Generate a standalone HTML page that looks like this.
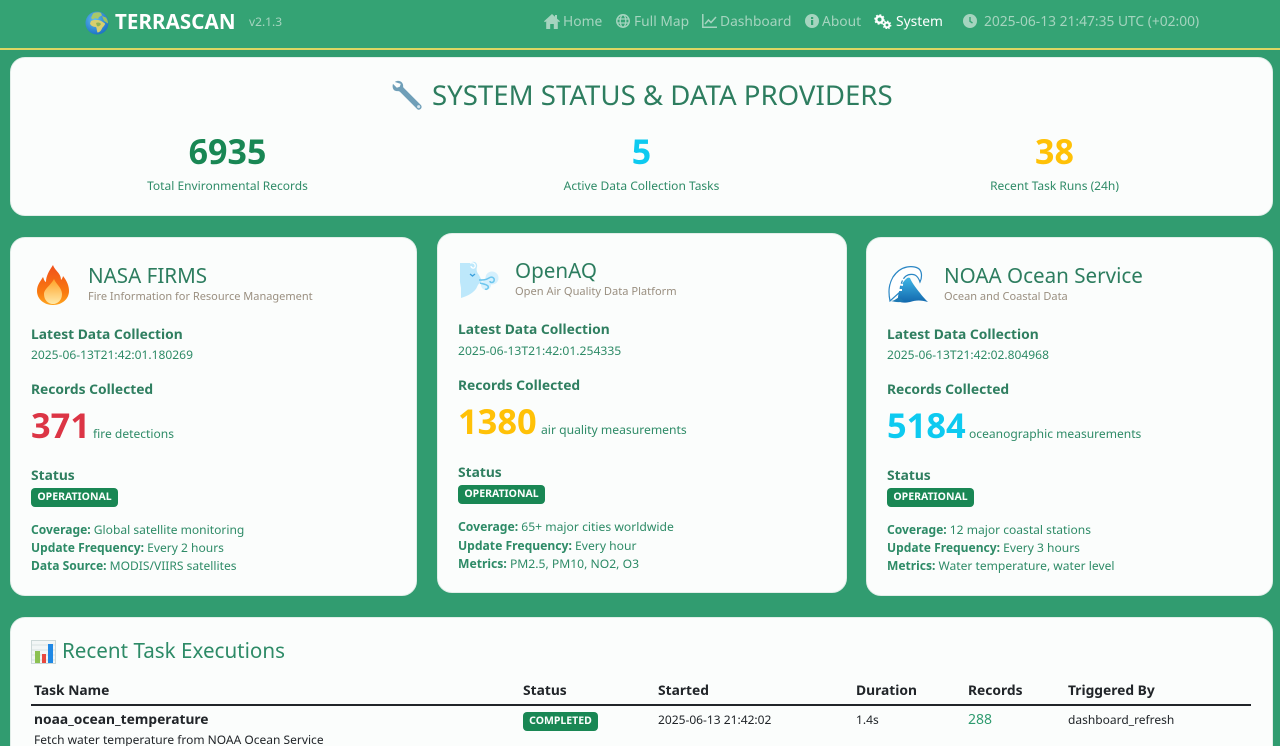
<!DOCTYPE html>
<html lang="en"><head><meta charset="utf-8"><title>TerraScan System Status</title>
<style>
*{box-sizing:border-box}
html,body{margin:0;padding:0;width:1280px;height:746px;overflow:hidden;background:#319c70}
body{position:relative;font-family:"Noto Sans","Open Sans","DejaVu Sans","Liberation Sans",sans-serif;color:#2e8b67}
.t{position:absolute;white-space:nowrap;line-height:20px;height:20px}
.card{position:absolute;background:#fbfdfc;border-radius:15px;border:1px solid #e2eee9}
.b{font-weight:700}
svg{position:absolute;display:block}
.nav{color:#a5d4bf;font-size:13.8px}
.h3{font-size:20.6px;color:#2d7d5f}
.sub{font-size:11px;color:#9a8f80}
.lab{font-size:13.8px;font-weight:700;color:#2f7f60}
.val{font-size:12.05px;color:#2e8b67}
.m{font-size:12.15px}
.big{font-size:34px;font-weight:700;line-height:40px;height:40px}
.bn{font-size:34.4px}
.bdg{position:absolute;background:#198754;color:#fbfdfc;font-size:10.5px;font-weight:700;border-radius:4px;text-align:center;line-height:19px;height:19px}
.th{font-size:13.8px;font-weight:700;color:#212529}
.td{font-size:12px;color:#212529}
</style></head><body>
<div style="position:absolute;left:0;top:0;width:1280px;height:48px;background:#34a374"></div>
<div style="position:absolute;left:0;top:48px;width:1280px;height:2px;background:#dcd763"></div>

<svg style="left:85px;top:11px" width="24" height="24" viewBox="0 0 24 24"><defs><radialGradient id="gl" cx=".4" cy=".35" r=".75"><stop offset="0" stop-color="#62bdf2"/><stop offset="1" stop-color="#1569c0"/></radialGradient></defs><circle cx="12" cy="12" r="11.500" fill="url(#gl)"/><path d="M8 2.500c3-1.500 6-1.500 8-.5l1 2.500-3 1.500-1 2-3-1-2 1.500L6 7z" fill="#a8c86a"/><path d="M6 10c3-1.500 8-1.500 11 .5l3 2c0 2-2 3-3 5-1 2.500-3 4-4.500 4-1-2-.5-4-1.500-5.500-3 0-5.500-1.500-6-3.500z" fill="#d8cf6e"/><path d="M11 12c2-1 4-.5 5 1-1 2-3 3-4 2z" fill="#8cb457"/><path d="M17 5l4 1.500c1.500 2 2 4 2 6l-4-2.500z" fill="#9cc25f"/></svg>
<div class="t b" style="left:115px;top:12px;font-size:20.5px;color:#fff;letter-spacing:.1px">TERRASCAN</div>
<div class="t" style="left:249px;top:12px;font-size:12px;color:#a5d4bf">v2.1.3</div>

<svg style="left:544px;top:14px" width="16" height="15" viewBox="0 0 16 15"><path fill="#a5d4bf" d="M8 0 0 7.300l1 1L2.200 7.300V15h4v-5h3.600v5h4V7.300L15 8.300l1-1L13 4.600V1h-2v1.800z"/></svg>
<div class="t nav" style="left:563px;top:12px">Home</div>
<svg style="left:616px;top:14px" width="14" height="14" viewBox="0 0 14 14"><circle cx="7" cy="7" r="6.200" fill="none" stroke="#a5d4bf" stroke-width="1.500"/><ellipse cx="7" cy="7" rx="2.800" ry="6.200" fill="none" stroke="#a5d4bf" stroke-width="1.300"/><path d="M1 5h12M1 9h12" stroke="#a5d4bf" stroke-width="1.300"/></svg>
<div class="t nav" style="left:634px;top:12px">Full Map</div>
<svg style="left:702px;top:14px" width="15" height="14" viewBox="0 0 15 14"><path d="M.8 0v13.200H15" fill="none" stroke="#a5d4bf" stroke-width="1.500"/><path d="M3 10l3.500-4 2.500 2.500L14 3" fill="none" stroke="#a5d4bf" stroke-width="1.500"/></svg>
<div class="t nav" style="left:720px;top:12px">Dashboard</div>
<svg style="left:805px;top:14px" width="14" height="14" viewBox="0 0 14 14"><circle cx="7" cy="7" r="7" fill="#a5d4bf"/><rect x="6" y="6" width="2.200" height="5" fill="#34a374"/><rect x="6" y="3" width="2.200" height="2" fill="#34a374"/></svg>
<div class="t nav" style="left:822px;top:12px">About</div>
<svg style="left:874px;top:14px" width="18" height="15" viewBox="0 0 18 15"><circle cx="5.500" cy="5.500" r="3.200" fill="none" stroke="#fff" stroke-width="2.400"/><circle cx="5.500" cy="5.500" r="4.500" fill="none" stroke="#fff" stroke-width="1.600" stroke-dasharray="1.800 1.700"/><circle cx="13" cy="11" r="2.400" fill="none" stroke="#fff" stroke-width="2"/><circle cx="13" cy="11" r="3.700" fill="none" stroke="#fff" stroke-width="1.400" stroke-dasharray="1.500 1.400"/></svg>
<div class="t" style="left:896px;top:12px;font-size:13.8px;color:#fff">System</div>
<svg style="left:963px;top:14px" width="14" height="14" viewBox="0 0 14 14"><circle cx="7" cy="7" r="7" fill="#a5d4bf"/><path d="M7 3v4.300l2.500 1.700" fill="none" stroke="#34a374" stroke-width="1.400"/></svg>
<div class="t nav" style="left:984px;top:12px">2025-06-13 21:47:35 UTC (+02:00)</div>

<div class="card" style="left:10px;top:57px;width:1263px;height:159px"></div>
<svg style="left:392px;top:80px" width="32" height="31" viewBox="0 0 33 32"><path d="M3 2c3-2 7-1 8 2 1 2 0 3 1 4l18 18c2 3-2 6-4 4L8 12c-2-1-3 0-5-1C1 10 0 7 1 4l4 4 3-1 1-3z" fill="#6f9fb8"/><circle cx="27.500" cy="27.500" r="1.600" fill="#d8e6ee"/></svg>
<div class="t" style="left:432px;top:75px;height:40px;line-height:40px;font-size:27.6px;color:#2d7d5f">SYSTEM STATUS &amp; DATA PROVIDERS</div>
<div class="t big" style="left:0;top:131px;width:455px;text-align:center;color:#198754">6935</div>
<div class="t" style="left:0;top:176px;width:455px;text-align:center;font-size:12px">Total Environmental Records</div>
<div class="t big" style="left:414px;top:131px;width:455px;text-align:center;color:#0dcaf0">5</div>
<div class="t" style="left:414px;top:176px;width:455px;text-align:center;font-size:12px">Active Data Collection Tasks</div>
<div class="t big" style="left:827px;top:131px;width:455px;text-align:center;color:#ffc107">38</div>
<div class="t" style="left:827px;top:176px;width:455px;text-align:center;font-size:12px">Recent Task Runs (24h)</div>

<!-- NASA -->
<div class="card" style="left:10px;top:237px;width:407px;height:359px"></div>
<svg style="left:36px;top:265px" width="34" height="40" viewBox="0 0 34 40"><defs><linearGradient id="f1" x1="0" y1="0" x2="0" y2="1"><stop offset="0" stop-color="#f0501c"/><stop offset=".7" stop-color="#f97b10"/><stop offset="1" stop-color="#ffa51e"/></linearGradient><linearGradient id="f2" x1="0" y1="0" x2="0" y2="1"><stop offset="0" stop-color="#ffa226"/><stop offset="1" stop-color="#ffe9a8"/></linearGradient></defs><path d="M17 0c2 6 8 8 8 15 1-1 2-3 2-4 4 5 6 10 6 15 0 8-7 14-16 14S1 34 1 26c0-6 3-9 6-14 1 2 1 4 3 5 0-6 3-11 7-17z" fill="url(#f1)"/><path d="M18 14c2 5 8 9 8 15 0 6-4 10-9 10s-9-4-9-10c0-5 7-9 10-15z" fill="url(#f2)"/></svg>
<div class="t h3" style="left:88px;top:266px">NASA FIRMS</div>
<div class="t sub" style="left:88px;top:287px">Fire Information for Resource Management</div>
<div class="t lab" style="left:31px;top:325px">Latest Data Collection</div>
<div class="t val" style="left:31px;top:345px">2025-06-13T21:42:01.180269</div>
<div class="t lab" style="left:31px;top:380px">Records Collected</div>
<div class="t big bn" style="left:31px;top:406px;color:#dc3545">371</div>
<div class="t val" style="left:93px;top:424px">fire detections</div>
<div class="t lab" style="left:31px;top:466px">Status</div>
<div class="bdg" style="left:31px;top:488px;width:87px">OPERATIONAL</div>
<div class="t val" style="left:31px;top:520px"><b>Coverage:</b> Global satellite monitoring</div>
<div class="t val" style="left:31px;top:538px"><b>Update Frequency:</b> Every 2 hours</div>
<div class="t val" style="left:31px;top:556px"><b>Data Source:</b> MODIS/VIIRS satellites</div>

<!-- OpenAQ -->
<div class="card" style="left:437px;top:233px;width:410px;height:360px"></div>
<svg style="left:459px;top:261px" width="41" height="39" viewBox="0 0 41 39"><path d="M1 2h10c4-3 8 0 7 4-1 3 0 6 2 8l3 6c-2 2-4 3-5 6-2 5-9 9-16 11V27l-1-6z" fill="#bde8fb"/><path d="M11 2c3-1 6 1 5 4-1 2-4 1-4-1" fill="none" stroke="#fff" stroke-width="1.200"/><circle cx="33" cy="17" r="6.500" fill="#d5f0fd"/><circle cx="27" cy="24" r="5" fill="#d5f0fd"/><path d="M20 19c4 0 7 0 10-2 3-2 6 0 5 3-1 2-4 2-4 0M21 22c3 1 6 1 8 3 1 2-1 4-3 3" fill="none" stroke="#6cc6ee" stroke-width="1.500"/><path d="M11 13l2.500 2 2.500-2" fill="none" stroke="#3a9fdc" stroke-width="1.300"/></svg>
<div class="t h3" style="left:515px;top:261px">OpenAQ</div>
<div class="t sub" style="left:515px;top:282px;font-size:11.1px">Open Air Quality Data Platform</div>
<div class="t lab" style="left:458px;top:320px">Latest Data Collection</div>
<div class="t val m" style="left:458px;top:341px">2025-06-13T21:42:01.254335</div>
<div class="t lab" style="left:458px;top:376px">Records Collected</div>
<div class="t big bn" style="left:458px;top:402px;color:#ffc107">1380</div>
<div class="t val m" style="left:541px;top:420px">air quality measurements</div>
<div class="t lab" style="left:458px;top:463px">Status</div>
<div class="bdg" style="left:458px;top:485px;width:87px">OPERATIONAL</div>
<div class="t val m" style="left:458px;top:517px"><b>Coverage:</b> 65+ major cities worldwide</div>
<div class="t val m" style="left:458px;top:536px"><b>Update Frequency:</b> Every hour</div>
<div class="t val m" style="left:458px;top:554px"><b>Metrics:</b> PM2.5, PM10, NO2, O3</div>

<!-- NOAA -->
<div class="card" style="left:866px;top:237px;width:407px;height:359px"></div>
<svg style="left:888px;top:266px" width="41" height="38" viewBox="0 0 41 38"><defs><linearGradient id="w" x1="0" y1="0" x2="0" y2="1"><stop offset="0" stop-color="#3fb6e6"/><stop offset="1" stop-color="#1268ad"/></linearGradient></defs><path d="M2 35C0 25 1 18 5 11 9 5 14 2 19 1c5-1 11 0 13 3 2 3 2 8 0 12-1-3-3-6-5-7-3-1-6-1-9 1-4 3-6 10-6 16z" fill="#fff" stroke="#2a86c4" stroke-width="1.200"/><path d="M10 31c1-7 3-13 7-17 2-2 3-3 5-2 1 3 5 9 10 15 3 4 6 7 8 9-7-2-12-2-18 0-5 1-9 1-12-1z" fill="url(#w)"/><path d="M11 12l5 2M9 18l6 1M8 24l6 0" stroke="#fff" stroke-width="2"/><path d="M3 35c3 0 5-2 8-4l5 4c-5 2-9 1-13 0z" fill="#1d79b4"/></svg>
<div class="t h3" style="left:944px;top:266px">NOAA Ocean Service</div>
<div class="t sub" style="left:944px;top:287px">Ocean and Coastal Data</div>
<div class="t lab" style="left:887px;top:325px">Latest Data Collection</div>
<div class="t val" style="left:887px;top:345px">2025-06-13T21:42:02.804968</div>
<div class="t lab" style="left:887px;top:380px">Records Collected</div>
<div class="t big bn" style="left:887px;top:406px;color:#0dcaf0">5184</div>
<div class="t val" style="left:969px;top:424px">oceanographic measurements</div>
<div class="t lab" style="left:887px;top:466px">Status</div>
<div class="bdg" style="left:887px;top:488px;width:87px">OPERATIONAL</div>
<div class="t val" style="left:887px;top:520px"><b>Coverage:</b> 12 major coastal stations</div>
<div class="t val" style="left:887px;top:538px"><b>Update Frequency:</b> Every 3 hours</div>
<div class="t val" style="left:887px;top:556px"><b>Metrics:</b> Water temperature, water level</div>

<!-- Tasks -->
<div class="card" style="left:10px;top:617px;width:1263px;height:160px"></div>
<svg style="left:31px;top:640px" width="25" height="24" viewBox="0 0 25 24"><rect x=".5" y=".5" width="24" height="23" fill="#f2f6f6" stroke="#ccd8d8"/><path d="M1 5h23M1 10h23M1 15h23M1 20h23" stroke="#d8e2e2"/><rect x="4" y="11" width="5" height="12" fill="#8cc152"/><rect x="11" y="14" width="4" height="9" fill="#e8483f"/><rect x="17" y="4" width="5" height="19" fill="#1e88e5"/></svg>
<div class="t" style="left:62px;top:636px;height:30px;line-height:30px;font-size:20.6px;color:#2e8b67">Recent Task Executions</div>
<div class="t th" style="left:34px;top:681px">Task Name</div>
<div class="t th" style="left:523px;top:681px">Status</div>
<div class="t th" style="left:658px;top:681px">Started</div>
<div class="t th" style="left:856px;top:681px">Duration</div>
<div class="t th" style="left:968px;top:681px">Records</div>
<div class="t th" style="left:1068px;top:681px">Triggered By</div>
<div style="position:absolute;left:31px;top:704px;width:1220px;height:2px;background:#212529"></div>
<div class="t th" style="left:34px;top:710px">noaa_ocean_temperature</div>
<div class="bdg" style="left:523px;top:712px;width:75px">COMPLETED</div>
<div class="t td" style="left:658px;top:710px">2025-06-13 21:42:02</div>
<div class="t td" style="left:856px;top:710px">1.4s</div>
<div class="t" style="left:968px;top:710px;font-size:14px;color:#2e9b6f">288</div>
<div class="t td" style="left:1068px;top:710px">dashboard_refresh</div>
<div class="t td" style="left:34px;top:730px">Fetch water temperature from NOAA Ocean Service</div>
</body></html>
